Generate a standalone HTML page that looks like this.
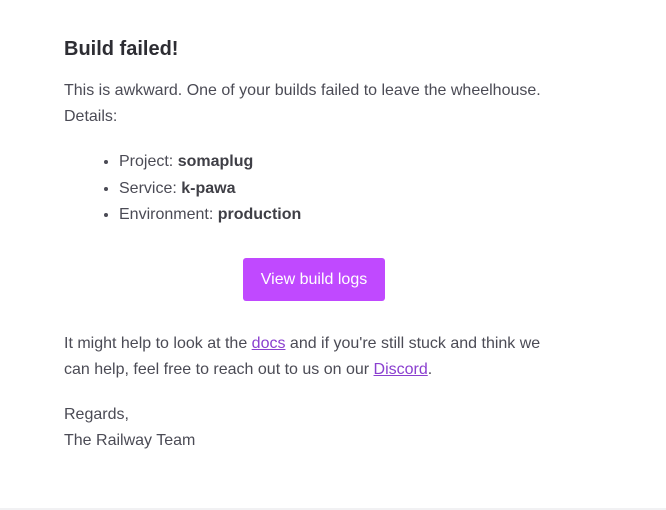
<!DOCTYPE html>
<html><head><style>
body{margin:0;width:666px;height:510px;background:#fff;font-family:"Liberation Sans",sans-serif;color:#4b4b55;position:relative;overflow:hidden}
.t{position:absolute;left:64px;font-size:16px;line-height:26px;white-space:nowrap}
h1{position:absolute;left:64px;top:35px;margin:0;font-size:20px;line-height:28px;color:#2d2d33;font-weight:bold}
ul{position:absolute;left:64px;top:149px;margin:0;padding-left:55px;font-size:16px;line-height:26.5px}
b{color:#3f3f46}
.btn{position:absolute;left:243px;top:258px;width:142px;height:43px;background:#c049ff;border-radius:3px;color:#fff;font-size:16px;line-height:43px;text-align:center}
a{color:#8a3fcf;text-decoration:underline}
.line{position:absolute;left:0;top:508px;width:666px;height:2px;background:#f1f1f3}
</style></head><body>
<h1>Build failed!</h1>
<div class="t" style="top:78px">This is awkward. One of your builds failed to leave the wheelhouse.<br>Details:</div>
<ul><li>Project: <b>somaplug</b></li><li>Service: <b>k-pawa</b></li><li>Environment: <b>production</b></li></ul>
<div class="btn">View build logs</div>
<div class="t" style="top:331px">It might help to look at the <a>docs</a> and if you're still stuck and think we<br>can help, feel free to reach out to us on our <a>Discord</a>.</div>
<div class="t" style="top:402px">Regards,<br>The Railway Team</div>
<div class="line"></div>
</body></html>
